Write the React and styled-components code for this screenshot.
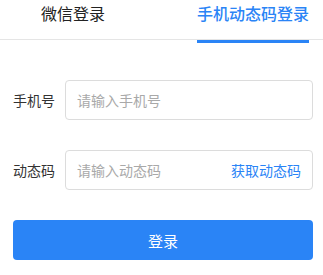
import React from "react";
import styled, { createGlobalStyle } from "styled-components";

const Global = createGlobalStyle`
  html, body { margin: 0; padding: 0; background: #fff; }
  body { font-family: "Noto Sans CJK SC", "Noto Sans", sans-serif; }
  * { box-sizing: border-box; }
`;

const Page = styled.div`
  width: 323px;
  height: 275px;
  background: #fff;
  overflow: hidden;
`;

const TabBar = styled.div`
  display: flex;
  justify-content: space-between;
  align-items: flex-start;
  height: 40px;
  padding: 0 14px 0 41px;
  border-bottom: 1px solid #e5e5e5;
`;

const Tab = styled.div`
  position: relative;
  font-size: 16px;
  line-height: 26px;
  color: ${(p) => (p.$active ? "#2a84f6" : "#222")};
  font-weight: ${(p) => (p.$active ? 500 : 400)};
  &::after {
    content: "";
    display: ${(p) => (p.$active ? "block" : "none")};
    position: absolute;
    left: 0;
    right: 0;
    bottom: -17px;
    height: 3px;
    background: #2a84f6;
  }
`;

const Form = styled.div`
  display: flex;
  flex-direction: column;
  gap: 30px;
  padding: 40px 10px 0 13px;
`;

const Row = styled.div`
  display: flex;
  align-items: center;
`;

const Label = styled.div`
  width: 52px;
  font-size: 14px;
  color: #333;
`;

const Field = styled.div`
  flex: 1;
  height: 40px;
  border: 1px solid #dcdcdc;
  border-radius: 4px;
  display: flex;
  align-items: center;
  padding: 0 11px;
`;

const Input = styled.input`
  flex: 1;
  min-width: 0;
  border: none;
  outline: none;
  font-family: inherit;
  font-size: 14px;
  color: #333;
  padding: 0;
  background: transparent;
  &::placeholder { color: #a9a9a9; }
`;

const CodeLink = styled.span`
  font-size: 14px;
  color: #2a84f6;
  cursor: pointer;
`;

const Button = styled.button`
  height: 40px;
  border: none;
  border-radius: 4px;
  background: #2a84f6;
  color: #fff;
  font-family: inherit;
  font-size: 15px;
  cursor: pointer;
`;

export default function App() {
  return (
    <Page>
      <Global />
      <TabBar>
        <Tab>微信登录</Tab>
        <Tab $active>手机动态码登录</Tab>
      </TabBar>
      <Form>
        <Row>
          <Label>手机号</Label>
          <Field>
            <Input placeholder="请输入手机号" />
          </Field>
        </Row>
        <Row>
          <Label>动态码</Label>
          <Field>
            <Input placeholder="请输入动态码" />
            <CodeLink>获取动态码</CodeLink>
          </Field>
        </Row>
        <Button>登录</Button>
      </Form>
    </Page>
  );
}
